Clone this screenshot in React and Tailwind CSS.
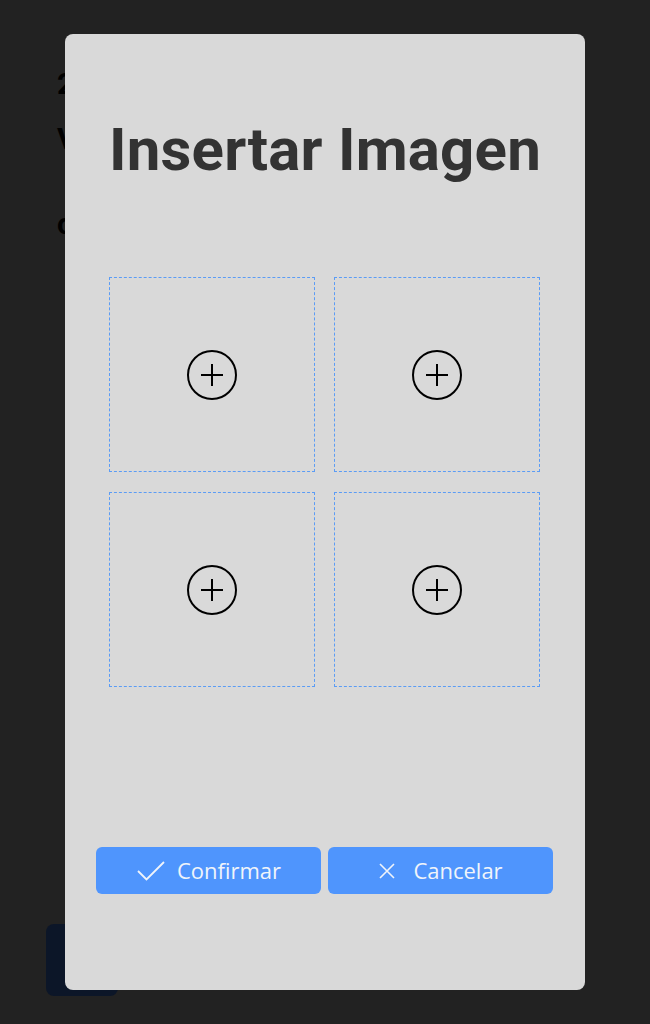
import React from 'react';

function PlusCircle() {
  return (
    <svg width="52" height="52" viewBox="0 0 52 52" fill="none" stroke="#000" strokeWidth="2">
      <circle cx="26" cy="26" r="24" />
      <path d="M26 15v22M15 26h22" />
    </svg>
  );
}

function CheckIcon() {
  return (
    <svg width="30" height="22" viewBox="0 0 30 22" fill="none" stroke="#f0f4fa" strokeWidth="1.8">
      <path d="M2 11l8.5 8.5L28 2" />
    </svg>
  );
}

function XIcon() {
  return (
    <svg width="18" height="18" viewBox="0 0 18 18" fill="none" stroke="#f0f4fa" strokeWidth="1.6">
      <path d="M2 2l14 14M16 2L2 16" />
    </svg>
  );
}

export default function App() {
  const slots = [1, 2, 3, 4];

  return (
    <div className="relative w-[650px] h-[1024px] bg-[#222222] overflow-hidden" style={{ fontFamily: 'Roboto, sans-serif' }}>
      {/* pagina de fondo (tapada por el modal) */}
      <div className="pl-[57px] pt-[69px] text-black font-bold text-[30px] leading-none">
        <p className="mb-[25px]">2</p>
        <p className="mb-[55px]">V</p>
        <p>o</p>
      </div>
      <div className="absolute left-[46px] top-[924px] w-[72px] h-[72px] rounded-lg bg-[#0c1628]" />

      {/* modal */}
      <div className="absolute left-[65px] top-[34px] w-[520px] h-[956px] rounded-lg bg-[#d9d9d9] flex flex-col items-center pt-[86px]">
        <h2 className="text-[60px] leading-[60px] font-bold text-[#333333] tracking-[0.2px]">Insertar Imagen</h2>

        <div className="grid grid-cols-2 gap-x-[19px] gap-y-5 mt-[97px] -ml-[1px]">
          {slots.map((s) => (
            <button
              key={s}
              className="w-[206px] h-[195px] border border-dashed border-[#5b9cf5] flex items-center justify-center"
            >
              <PlusCircle />
            </button>
          ))}
        </div>

        <div className="flex gap-[7px] mt-auto mb-[96px] -ml-[1px]" style={{ fontFamily: '"Open Sans", sans-serif' }}>
          <button className="w-[225px] h-[47px] rounded-md bg-[#4f95fd] flex items-center justify-center gap-[11px] text-[#f0f4fa] text-[22px] font-medium">
            <CheckIcon />
            Confirmar
          </button>
          <button className="w-[225px] h-[47px] rounded-md bg-[#4f95fd] flex items-center justify-center gap-[17px] text-[#f0f4fa] text-[22px] font-medium">
            <XIcon />
            Cancelar
          </button>
        </div>
      </div>
    </div>
  );
}
